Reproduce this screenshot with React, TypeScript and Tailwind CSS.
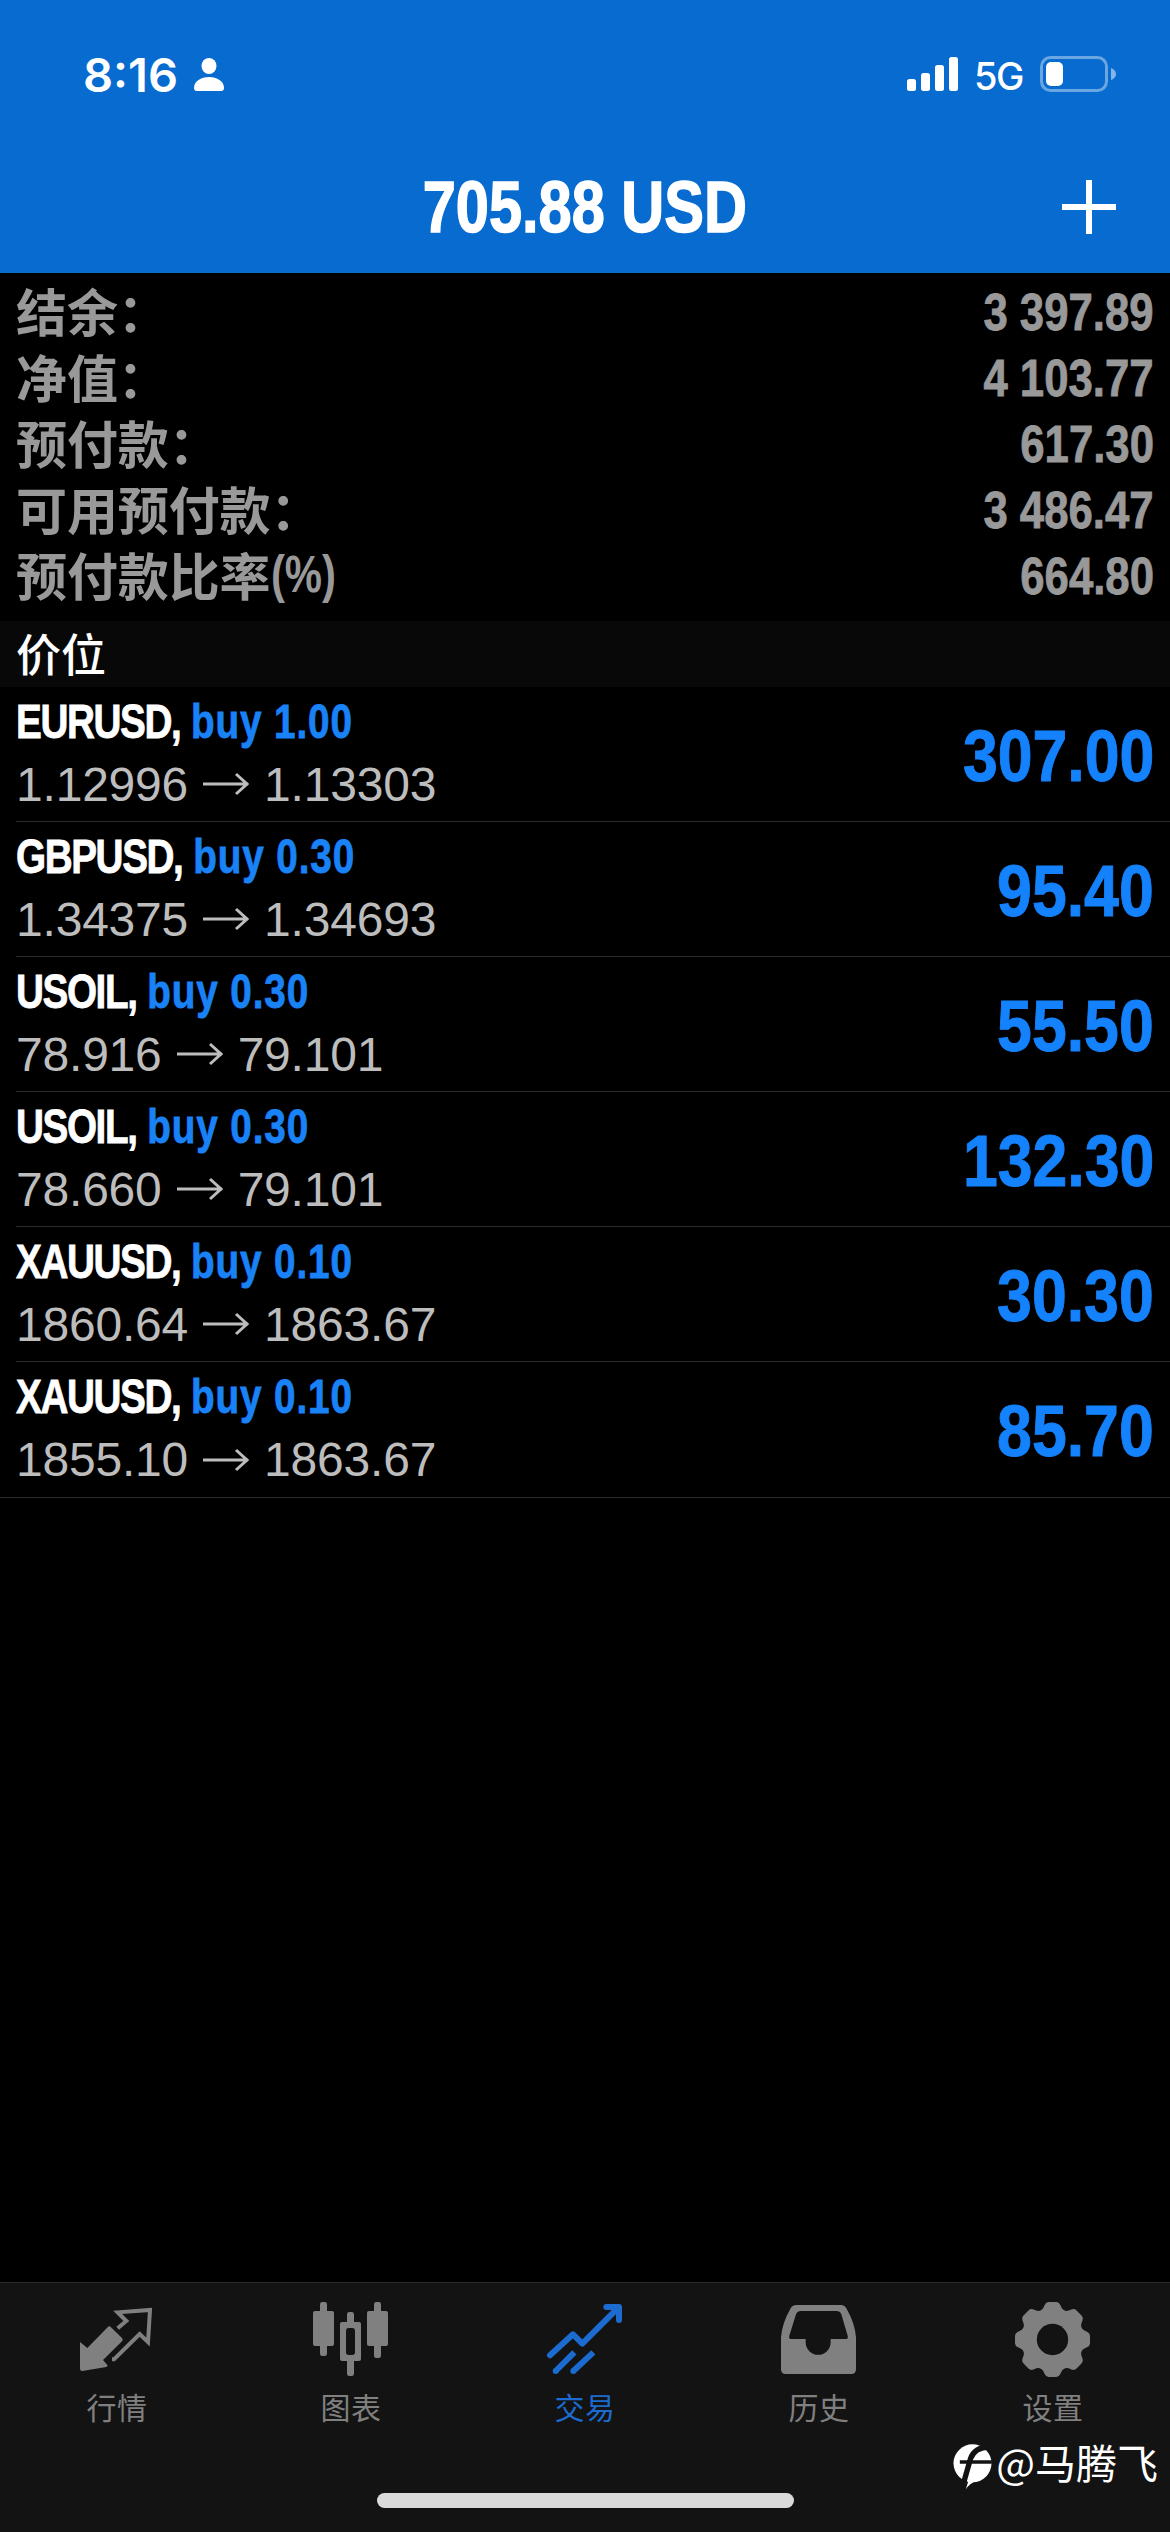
import React from 'react';

const ACCOUNT_ROWS = [
  { label: '结余：', value: '3 397.89' },
  { label: '净值：', value: '4 103.77' },
  { label: '预付款：', value: '617.30' },
  { label: '可用预付款：', value: '3 486.47' },
  { label: '预付款比率', unit: '(%)', value: '664.80' }
];

const POSITIONS = [
  { id: 1, symbol: 'EURUSD', side: 'buy 1.00', open: '1.12996', current: '1.13303', profit: '307.00' },
  { id: 2, symbol: 'GBPUSD', side: 'buy 0.30', open: '1.34375', current: '1.34693', profit: '95.40' },
  { id: 3, symbol: 'USOIL', side: 'buy 0.30', open: '78.916', current: '79.101', profit: '55.50' },
  { id: 4, symbol: 'USOIL', side: 'buy 0.30', open: '78.660', current: '79.101', profit: '132.30' },
  { id: 5, symbol: 'XAUUSD', side: 'buy 0.10', open: '1860.64', current: '1863.67', profit: '30.30' },
  { id: 6, symbol: 'XAUUSD', side: 'buy 0.10', open: '1855.10', current: '1863.67', profit: '85.70' }
];

const QuotesIcon = () => (
  <svg className="size-20" viewBox="0 0 240 240" fill="none">
    <path
      d="M9 126 L31 144 L92 82 Q97 76 102 82 L135 114 Q140 119 135 124 L78 180 L91 195 Q93 200 88 201 L16 213 Q9 213 9 207 Z"
      fill="currentColor"
    />
    <path d="M122 85 L148 63 L122 37 L219 30 L213 126 L188 102 L111 178 H105" stroke="currentColor" strokeWidth="12" />
  </svg>
);

const ChartIcon = () => (
  <svg className="size-20" viewBox="0 0 240 240" fill="currentColor">
    <rect x="6" y="33" width="63" height="105" rx="6" />
    <rect x="27" y="6" width="21" height="162" rx="7" />
    <rect x="168" y="33" width="63" height="105" rx="6" />
    <rect x="189" y="6" width="21" height="168" rx="7" />
    <rect x="87" y="66" width="63" height="117" rx="6" />
    <rect x="108" y="36" width="21" height="192" rx="7" />
    <rect x="105" y="84" width="27" height="81" rx="8" fill="#131313" />
  </svg>
);

const TradeIcon = () => (
  <svg className="size-20" viewBox="0 0 240 240" fill="none" stroke="currentColor" strokeWidth="18" strokeLinejoin="round">
    <path d="M15 166 L84 103 L112 131 L220 23" strokeLinecap="round" />
    <path d="M184 21 H222 V60" strokeLinecap="round" />
    <path d="M88 157 L32 213 M145 157 L85 213" />
    <circle cx="32" cy="213" r="9" fill="currentColor" stroke="none" />
    <circle cx="85" cy="213" r="9" fill="currentColor" stroke="none" />
  </svg>
);

const HistoryIcon = () => (
  <svg className="size-20" viewBox="0 0 240 240" fill="currentColor" fillRule="evenodd">
    <path d="M6 112 Q9 70 35 25 Q41 15 52 15 H186 Q196 15 202 25 Q228 70 231 112 V208 Q231 222 217 222 H20 Q6 222 6 208 Z M66 33 Q55 33 51 43 L31 107 Q28 117 38 117 H80 V127 A37.5 37.5 0 0 0 155 127 V117 H199 Q209 117 206 107 L187 43 Q183 33 172 33 Z" />
  </svg>
);

const TOOTH_ANGLES = [0, 45, 90, 135, 180, 225, 270, 315];

const SettingsIcon = () => (
  <svg className="size-20" viewBox="0 0 240 240" fill="currentColor">
    {TOOTH_ANGLES.map(angle => (
      <path
        key={angle}
        d="M82 31.6 Q90 29 95 15 Q99 6 107 6 H130 Q138 6 142 15 Q147 29 155 31.6 L118.5 118.5 Z"
        transform={`rotate(${angle} 118.5 118.5)`}
      />
    ))}
    <circle cx="118.5" cy="118.5" r="91" />
    <circle cx="118.5" cy="118.5" r="47" fill="#131313" />
  </svg>
);

const TABS = [
  { id: 'quotes', label: '行情', Icon: QuotesIcon },
  { id: 'chart', label: '图表', Icon: ChartIcon },
  { id: 'trade', label: '交易', Icon: TradeIcon },
  { id: 'history', label: '历史', Icon: HistoryIcon },
  { id: 'settings', label: '设置', Icon: SettingsIcon }
];

const StatusBar = () => (
  <div className="flex h-[148px] items-center justify-between pl-[83px] pr-[54px] font-['Inter',sans-serif]">
    <div className="flex items-center">
      <span className="text-[47px] font-semibold leading-none">8:16</span>
      <svg className="ml-4 h-[33px] w-[30px]" viewBox="0 0 30 33" fill="currentColor">
        <ellipse cx="15" cy="8" rx="7.5" ry="8" />
        <path d="M0 30 C0 23 7 19 15 19 S30 23 30 30 Q30 33 27 33 H3 Q0 33 0 30 Z" />
      </svg>
    </div>
    <div className="flex items-center">
      <svg className="h-[34px] w-[51px]" viewBox="0 0 51 34" fill="currentColor">
        <rect x="0" y="22" width="9" height="12" rx="2.5" />
        <rect x="14" y="16" width="9" height="18" rx="2.5" />
        <rect x="28" y="8" width="9" height="26" rx="2.5" />
        <rect x="42" y="0" width="9" height="34" rx="2.5" />
      </svg>
      <span className="ml-4 pt-1 text-[38px] font-medium leading-none tracking-[-1.5px]">5G</span>
      <svg className="ml-[17px] h-9 w-[76px]" viewBox="0 0 76 36" fill="currentColor">
        <rect x="1.5" y="1.5" width="65" height="33" rx="9" fill="none" stroke="currentColor" strokeWidth="3" opacity="0.4" />
        <rect x="6" y="6" width="17" height="24" rx="5" />
        <path d="M71 12 Q76 14 76 18 T71 24 Z" opacity="0.5" />
      </svg>
    </div>
  </div>
);

const Header = () => (
  <header className="h-[273px] bg-[#076bcf] text-white">
    <StatusBar />
    <div className="grid h-[117px] grid-cols-[1fr_auto_1fr] items-center">
      <span />
      <h1 className="scale-x-[0.815] text-[73px] font-bold leading-none whitespace-nowrap [-webkit-text-stroke:1.5px_currentColor]">
        705.88 USD
      </h1>
      <button className="mr-[54px] justify-self-end" aria-label="New order">
        <svg className="size-[54px]" viewBox="0 0 54 54" stroke="currentColor" strokeWidth="6">
          <path d="M0 27 H54 M27 0 V54" />
        </svg>
      </button>
    </div>
  </header>
);

const AccountSummary = () => (
  <section className="pt-1.5 pb-3 pl-4 pr-4 text-[51px] text-[#999]">
    {ACCOUNT_ROWS.map(row => (
      <div key={row.label} className="flex h-[66px] items-center justify-between">
        <span className="flex items-center pb-1 font-['Noto_Sans_CJK_SC',sans-serif] font-bold leading-none tracking-[-0.1px]">
          {row.label}
          {row.unit && <span className="origin-left scale-x-[0.82] font-['Liberation_Sans',sans-serif]">{row.unit}</span>}
        </span>
        <span className="origin-right scale-x-[0.857] font-bold leading-none [-webkit-text-stroke:0.8px_currentColor]">
          {row.value}
        </span>
      </div>
    ))}
  </section>
);

interface PositionRowProps {
  position: (typeof POSITIONS)[number];
  last: boolean;
}

const PositionRow: React.FC<PositionRowProps> = ({ position, last }) => (
  <li className={last ? 'border-b border-[#2c2c2c]' : ''}>
    <div className={`ml-4 flex h-[135px] items-center justify-between pr-4 ${last ? '' : 'border-b border-[#2c2c2c]'}`}>
      <div className="pb-[3px]">
        <div className="origin-left scale-x-[0.79] text-[49px] font-bold leading-[63px] whitespace-nowrap [-webkit-text-stroke:0.8px_currentColor]">
          <span className="tracking-[-1.8px]">{position.symbol},</span>{' '}
          <span className="tracking-[1.1px] text-[#1a82f7]">{position.side}</span>
        </div>
        <div className="flex items-center text-5xl leading-[63px] tracking-[-0.2px] text-[#bdbdbd]">
          {position.open}
          <svg className="mx-[15px] h-6 w-[46px]" viewBox="0 0 46 24" fill="none" stroke="currentColor" strokeWidth="3">
            <path d="M0 12 H45 M33 2 L44 12 L33 22" />
          </svg>
          {position.current}
        </div>
      </div>
      <div className="origin-right scale-x-[0.857] pt-0.5 text-[73px] font-bold leading-none text-[#1482fc] [-webkit-text-stroke:1px_currentColor]">
        {position.profit}
      </div>
    </div>
  </li>
);

const TabBar = () => (
  <nav className="h-[250px] border-t border-[#2a2a2a] bg-[#131313]">
    <div className="grid grid-cols-5 pt-[17px]">
      {TABS.map(({ id, label, Icon }) => (
        <div key={id} className={`flex flex-col items-center ${id === 'trade' ? 'text-[#1b6bd0]' : 'text-[#808080]'}`}>
          <Icon />
          <span className="mt-2 font-['Noto_Sans_CJK_SC',sans-serif] text-[30px] leading-9 tracking-[0.6px]">{label}</span>
        </div>
      ))}
    </div>
    <div className="mx-auto mt-[69px] h-[15px] w-[417px] rounded-full bg-[#dadada]" />
  </nav>
);

const Watermark = () => (
  <div className="absolute right-[12px] bottom-[40px] flex items-center gap-1 text-white">
    <svg className="h-[46px] w-[39px]" viewBox="0 0 116 138">
      <circle cx="58" cy="58" r="57" fill="currentColor" />
      <path d="M108 9 Q64 10 52 44 L28 128" stroke="#131313" strokeWidth="16" fill="none" />
      <path d="M20 54 H116" stroke="#131313" strokeWidth="10" />
      <path d="M52 90 L38 136 Q48 118 72 110 Z" fill="currentColor" />
    </svg>
    <span className="pb-2.5 font-['Noto_Sans_CJK_SC',sans-serif] text-[41px] leading-none">@马腾飞</span>
  </div>
);

export default function App() {
  return (
    <div className="relative flex h-[2532px] w-[1170px] flex-col overflow-hidden bg-black font-['Liberation_Sans',Arial,sans-serif]">
      <Header />
      <AccountSummary />
      <h2 className="flex h-[66px] items-center bg-[#080808] pb-1 pl-4 font-['Noto_Sans_CJK_SC',sans-serif] text-[45px] font-medium leading-none text-white">
        价位
      </h2>
      <ul className="flex-1 text-white">
        {POSITIONS.map((position, index) => (
          <PositionRow key={position.id} position={position} last={index === POSITIONS.length - 1} />
        ))}
      </ul>
      <TabBar />
      <Watermark />
    </div>
  );
}
